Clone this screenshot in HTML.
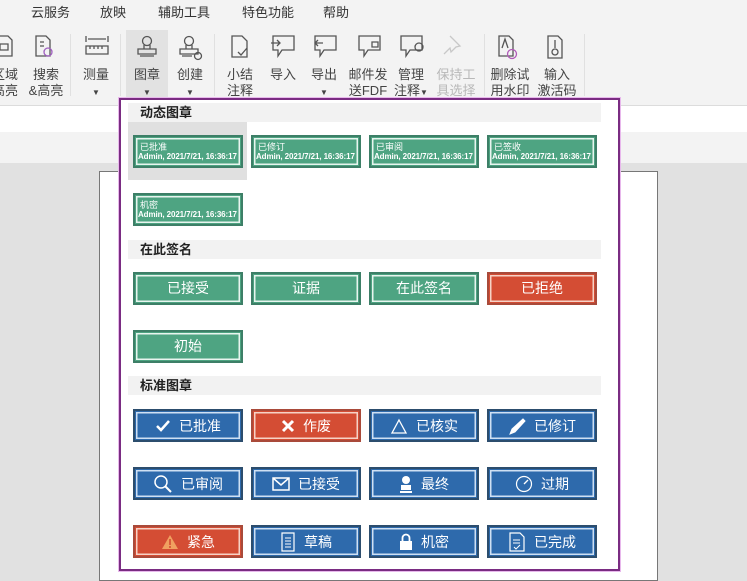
<!DOCTYPE html>
<html><head><meta charset="utf-8"><style>
*{margin:0;padding:0;box-sizing:border-box}
body{width:747px;height:575px;overflow:hidden;position:relative;background:#e1e1e1;font-family:"Liberation Sans","Noto Sans CJK SC",sans-serif;color:#333}
.abs{position:absolute}
.tb{left:0;top:0;width:747px;height:106px;background:#f3f3f3;border-bottom:1px solid #dcdcdc}
.menu{top:2px;font-size:13px;color:#333}
.lbl{font-size:13px;color:#444;text-align:center;line-height:16px;width:50px;margin-left:-25px;top:67px}
.lbl.dis{color:#b8b8b8}
.sep{top:34px;width:1px;height:62px;background:#e0e0e0}
.ic{top:34px}
.st{position:absolute;width:110px;height:33px;border:2px solid #3d7f67;background:#4ea482;color:#fff;box-shadow:inset 0 0 0 1px #4ea482,inset 0 0 0 2.5px #e8f5ef}
.dyn .t1{position:absolute;left:5px;top:3px;font-size:9px}
.dyn .t2{position:absolute;left:3px;top:15px;font-size:8px;font-weight:bold;white-space:nowrap;letter-spacing:-0.1px}
.big{font-size:14px;text-align:center;line-height:29px}
.red{background:#d44d34;border-color:#a94a3a;box-shadow:inset 0 0 0 1px #d44d34,inset 0 0 0 2.5px #f6d2c6}
.blue{background:#2e6aac;border-color:#2c4d6d;box-shadow:inset 0 0 0 1px #2e6aac,inset 0 0 0 2.5px #cfe0f3}
.blue,.red.std{display:flex;align-items:center;justify-content:center;font-size:14px;gap:8px}
.hd{position:absolute;left:128px;width:473px;height:19px;background:#f2f2f2;font-size:13px;font-weight:bold;color:#222;padding-left:12px;line-height:19px}
svg{display:block}
</style></head><body>
<div class="abs tb"></div>
<div class="abs" style="left:0;top:106px;width:747px;height:26px;background:#fff"></div>
<div class="abs" style="left:0;top:132px;width:747px;height:31px;background:#f3f3f3"></div>
<div class="abs" style="left:99px;top:171px;width:559px;height:410px;background:#fff;border:1px solid #777"></div>

<div class="abs menu" style="left:31px">云服务</div>
<div class="abs menu" style="left:100px">放映</div>
<div class="abs menu" style="left:158px">辅助工具</div>
<div class="abs menu" style="left:242px">特色功能</div>
<div class="abs menu" style="left:323px">帮助</div>

<div class="abs" style="left:126px;top:30px;width:42px;height:70px;background:#e2e2e2"></div>
<div class="abs sep" style="left:70px"></div>
<div class="abs sep" style="left:120px"></div>
<div class="abs sep" style="left:214px"></div>
<div class="abs sep" style="left:484px"></div>
<div class="abs sep" style="left:584px"></div>

<svg class="abs" style="left:0;top:30px" width="600" height="36" fill="none" stroke="#555" stroke-width="1.3">
<path d="M-4 6h12l4 4v16h-16M0 14h8v6h-8z"/>
<path d="M36 6h10l4 4v16h-14zM40 12h4M40 16h4"/><circle cx="48" cy="22" r="4" stroke="#a060c0"/>
<path d="M86 6v6M108 6v6M88 9h18M86 16h22v8h-22zM90 16v3M94 16v3M98 16v3M102 16v3"/>
<circle cx="147" cy="11" r="4.5"/><path d="M144 15v4h6v-4M138 19h18v5h-18zM140 26h14"/>
<circle cx="189" cy="11" r="4.5"/><path d="M186 15v4h6v-4M180 19h18v5h-18zM182 26h10"/><circle cx="198" cy="26" r="3.5"/>
<path d="M232 6h10l5 5v16h-15zM238 22l3 3 6-7"/>
<path d="M273 6h21v14h-12l-4 6v-6h-5zM271 13h8M277 10l3 3-3 3"/>
<path d="M315 6h21v14h-12l-4 6v-6h-5zM323 13h-8M318 10l-3 3 3 3"/>
<path d="M359 6h21v14h-12l-4 6v-6h-5zM372 12h6v5h-6z"/>
<path d="M401 6h21v14h-12l-4 6v-6h-5z"/><circle cx="419" cy="17" r="4"/>
<path stroke="#c8c8c8" d="M450 6l10 10-4 1-5 5-1-4-6 6M452 8l6 6"/>
<path d="M499 6h10l4 4v16h-14zM502 18l3-9 3 9"/><circle cx="512" cy="24" r="4.5" stroke="#b05ab8"/>
<path d="M548 6h10l4 4v18h-14zM555 10v8"/><circle cx="555" cy="22" r="3"/>
</svg>

<div class="abs lbl" style="left:5px">区域<br>高亮</div>
<div class="abs lbl" style="left:46px">搜索<br>&amp;高亮</div>
<div class="abs lbl" style="left:96px">测量<br><span style="font-size:8px">▼</span></div>
<div class="abs lbl" style="left:147px">图章<br><span style="font-size:8px">▼</span></div>
<div class="abs lbl" style="left:190px">创建<br><span style="font-size:8px">▼</span></div>
<div class="abs lbl" style="left:240px">小结<br>注释</div>
<div class="abs lbl" style="left:283px">导入</div>
<div class="abs lbl" style="left:324px">导出<br><span style="font-size:8px">▼</span></div>
<div class="abs lbl" style="left:368px">邮件发<br>送FDF</div>
<div class="abs lbl" style="left:411px">管理<br>注释<span style="font-size:8px">▼</span></div>
<div class="abs lbl dis" style="left:456px">保持工<br>具选择</div>
<div class="abs lbl" style="left:510px">删除试<br>用水印</div>
<div class="abs lbl" style="left:557px">输入<br>激活码</div>

<div class="abs" style="left:119px;top:98px;width:501px;height:473px;background:#fff;border:2px solid #7a2c82;box-shadow:0 0 0 1px #e8b8ec"></div>
<div class="hd" style="top:103px">动态图章</div>
<div class="abs" style="left:128px;top:122px;width:119px;height:58px;background:#e0e0e0"></div>
<div class="st dyn" style="left:133px;top:135px"><span class="t1">已批准</span><span class="t2">Admin, 2021/7/21, 16:36:17</span></div>
<div class="st dyn" style="left:251px;top:135px"><span class="t1">已修订</span><span class="t2">Admin, 2021/7/21, 16:36:17</span></div>
<div class="st dyn" style="left:369px;top:135px"><span class="t1">已审阅</span><span class="t2">Admin, 2021/7/21, 16:36:17</span></div>
<div class="st dyn" style="left:487px;top:135px"><span class="t1">已签收</span><span class="t2">Admin, 2021/7/21, 16:36:17</span></div>
<div class="st dyn" style="left:133px;top:193px"><span class="t1">机密</span><span class="t2">Admin, 2021/7/21, 16:36:17</span></div>

<div class="hd" style="top:240px">在此签名</div>
<div class="st big" style="left:133px;top:272px">已接受</div>
<div class="st big" style="left:251px;top:272px">证据</div>
<div class="st big" style="left:369px;top:272px">在此签名</div>
<div class="st big red" style="left:487px;top:272px">已拒绝</div>
<div class="st big" style="left:133px;top:330px">初始</div>

<div class="hd" style="top:376px">标准图章</div>
<div class="st blue" style="left:133px;top:409px"><svg width="16" height="14"><path d="M2 7l4 4 8-9" stroke="#fff" stroke-width="2.5" fill="none"/></svg>已批准</div>
<div class="st red std" style="left:251px;top:409px"><svg width="14" height="14"><path d="M2 2l10 10M12 2l-10 10" stroke="#fff" stroke-width="3"/></svg>作废</div>
<div class="st blue" style="left:369px;top:409px"><svg width="18" height="16"><path d="M9 2l7 13h-14z" stroke="#fff" fill="none" stroke-width="1.3"/></svg>已核实</div>
<div class="st blue" style="left:487px;top:409px"><svg width="18" height="18"><path d="M2 17l2-5 11-10 2 2-10 11z" stroke="#fff" fill="#fff" stroke-width="1"/></svg>已修订</div>
<div class="st blue" style="left:133px;top:467px"><svg width="20" height="20"><circle cx="8" cy="8" r="6" stroke="#fff" fill="none" stroke-width="1.5"/><path d="M12 12l6 6" stroke="#fff" stroke-width="2"/></svg>已审阅</div>
<div class="st blue" style="left:251px;top:467px"><svg width="18" height="14"><rect x="1" y="1" width="16" height="12" stroke="#fff" fill="none" stroke-width="1.5"/><path d="M1 1l8 7 8-7" stroke="#fff" fill="none" stroke-width="1.5"/></svg>已接受</div>
<div class="st blue" style="left:369px;top:467px"><svg width="14" height="18"><circle cx="7" cy="5" r="4" fill="#fff"/><rect x="2" y="10" width="10" height="5" fill="#fff"/><rect x="1" y="16" width="12" height="2" fill="#fff"/></svg>最终</div>
<div class="st blue" style="left:487px;top:467px"><svg width="18" height="18"><circle cx="9" cy="9" r="7.5" stroke="#fff" fill="none" stroke-width="1.2"/><path d="M9 9l4-4" stroke="#fff" stroke-width="1.3"/></svg>过期</div>
<div class="st red std" style="left:133px;top:525px"><svg width="18" height="16"><path d="M9 1l8 14h-16z" fill="#f0a060"/><path d="M9 5v6M9 12v2" stroke="#d44d34" stroke-width="1.6"/></svg>紧急</div>
<div class="st blue" style="left:251px;top:525px"><svg width="16" height="20"><path d="M2 1h12v18h-12z" stroke="#fff" fill="none" stroke-width="1.2"/><path d="M5 6h6M5 9h6M5 12h6M5 15h6" stroke="#fff"/></svg>草稿</div>
<div class="st blue" style="left:369px;top:525px"><svg width="14" height="18"><path d="M3.5 8v-3a3.5 3.5 0 017 0v3" stroke="#fff" fill="none" stroke-width="1.8"/><rect x="1" y="8" width="12" height="9" fill="#fff"/></svg>机密</div>
<div class="st blue" style="left:487px;top:525px"><svg width="18" height="20"><path d="M2 1h10l4 4v14h-14z" stroke="#fff" fill="none" stroke-width="1.2"/><path d="M5 8h7M5 11h7M6 15l2 2 4-4" stroke="#fff" fill="none"/></svg>已完成</div>
</body></html>
